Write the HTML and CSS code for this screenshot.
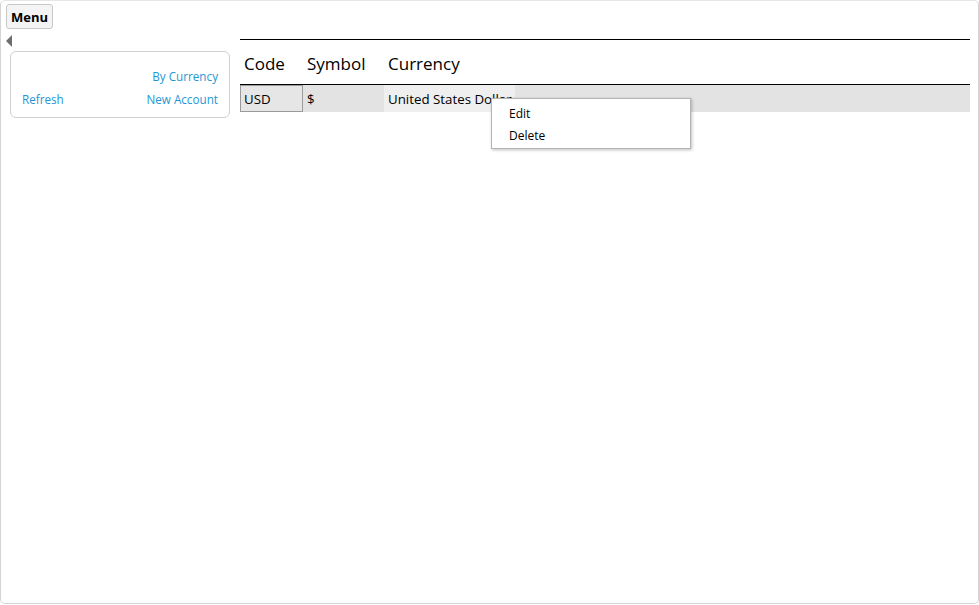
FILE: index.html
```html
<!DOCTYPE html>
<html lang="en">
<head>
    <meta charset="UTF-8">
    <title>Currencies</title>
    <link rel="stylesheet" href="styles.css">
</head>
<body>
    <div class="window">
        <div class="top-bar">
            <button class="menu-button">Menu</button>
        </div>
        <div class="content">
            <div class="side">
                <div class="collapse-arrow"></div>
                <div class="side-card">
                    <div class="side-row side-row-right">
                        <a href="#">By Currency</a>
                    </div>
                    <div class="side-row">
                        <a href="#">Refresh</a>
                        <a href="#">New Account</a>
                    </div>
                </div>
            </div>
            <div class="main">
                <div class="grid">
                    <div class="grid-header">
                        <div class="col-code">Code</div>
                        <div class="col-symbol">Symbol</div>
                        <div class="col-currency">Currency</div>
                    </div>
                    <div class="grid-row">
                        <div class="col-code cell-selected">USD</div>
                        <div class="col-symbol">$</div>
                        <div class="col-currency cell-light">United States Dollar</div>
                    </div>
                    <!-- context menu opened on the row -->
                    <div class="context-menu">
                        <div class="context-item">Edit</div>
                        <div class="context-item">Delete</div>
                    </div>
                </div>
            </div>
        </div>
    </div>
</body>
</html>
```

FILE: styles.css
```css
*{
    box-sizing: border-box;
    padding: 0;
    margin: 0;
}
body{
    font-family: "Open Sans", "Noto Sans", sans-serif;
    background-color: #fff;
    color: #000;
}
.window{
    width: 979px;
    height: 604px;
    border: 1px solid #d4d4d4;
    border-top-color: #e6e6e6;
    border-radius: 5px;
    padding: 3px 5px 0 5px;
}
.menu-button{
    font-family: "Open Sans", sans-serif;
    font-weight: bold;
    font-size: 13px;
    padding: 2px 4px;
    height: 25px;
    background-color: #f4f4f4;
    border: 1px solid #c8c8c8;
    border-radius: 3px;
    color: #000;
}
.content{
    display: flex;
    margin-top: 6px;
}
.side{
    width: 234px;
    padding-right: 10px;
}
.collapse-arrow{
    width: 0;
    height: 0;
    border-top: 6px solid transparent;
    border-bottom: 6px solid transparent;
    border-right: 6px solid #6e6e6e;
}
.side-card{
    margin-top: 4px;
    margin-left: 4px;
    height: 67px;
    border: 1px solid #d0d0d0;
    border-radius: 6px;
    padding: 16px 11px 0 11px;
}
.side-row{
    display: flex;
    justify-content: space-between;
    height: 23px;
}
.side-row-right{
    justify-content: flex-end;
}
.side-row a{
    color: #1e97d6;
    text-decoration: none;
    font-size: 11.7px;
}
.main{
    flex: 1;
    padding-right: 3px;
    padding-top: 4px;
}
.grid{
    position: relative;
    border-top: 1px solid #000;
}
.grid-header{
    display: flex;
    height: 45px;
    align-items: center;
    padding-top: 2px;
    font-size: 17px;
    border-bottom: 1px solid #000;
}
.grid-header div{
    padding-left: 4px;
}
.col-code{
    width: 63px;
}
.col-symbol{
    width: 81px;
}
.col-currency{
    width: 131px;
}
.grid-row{
    display: flex;
    height: 27px;
    background-color: #e3e3e3;
    font-size: 13.3px;
}
.grid-row div{
    padding-left: 4px;
    padding-top: 1px;
    line-height: 26px;
}
.grid-row .cell-selected{
    border: 1px solid #9a9a9a;
    background-color: #e6e6e6;
    padding-left: 3px;
    padding-top: 0;
    line-height: 26px;
}
.grid-row .cell-light{
    background-color: #efefef;
    white-space: nowrap;
}
.context-menu{
    position: absolute;
    left: 251px;
    top: 58px;
    width: 200px;
    height: 51px;
    background-color: #fff;
    border: 1px solid #b4b4b4;
    box-shadow: 1px 1px 3px rgba(0, 0, 0, 0.25);
    padding: 4px 0 0 17px;
}
.context-item{
    font-size: 12px;
    height: 22px;
    line-height: 22px;
}
```
